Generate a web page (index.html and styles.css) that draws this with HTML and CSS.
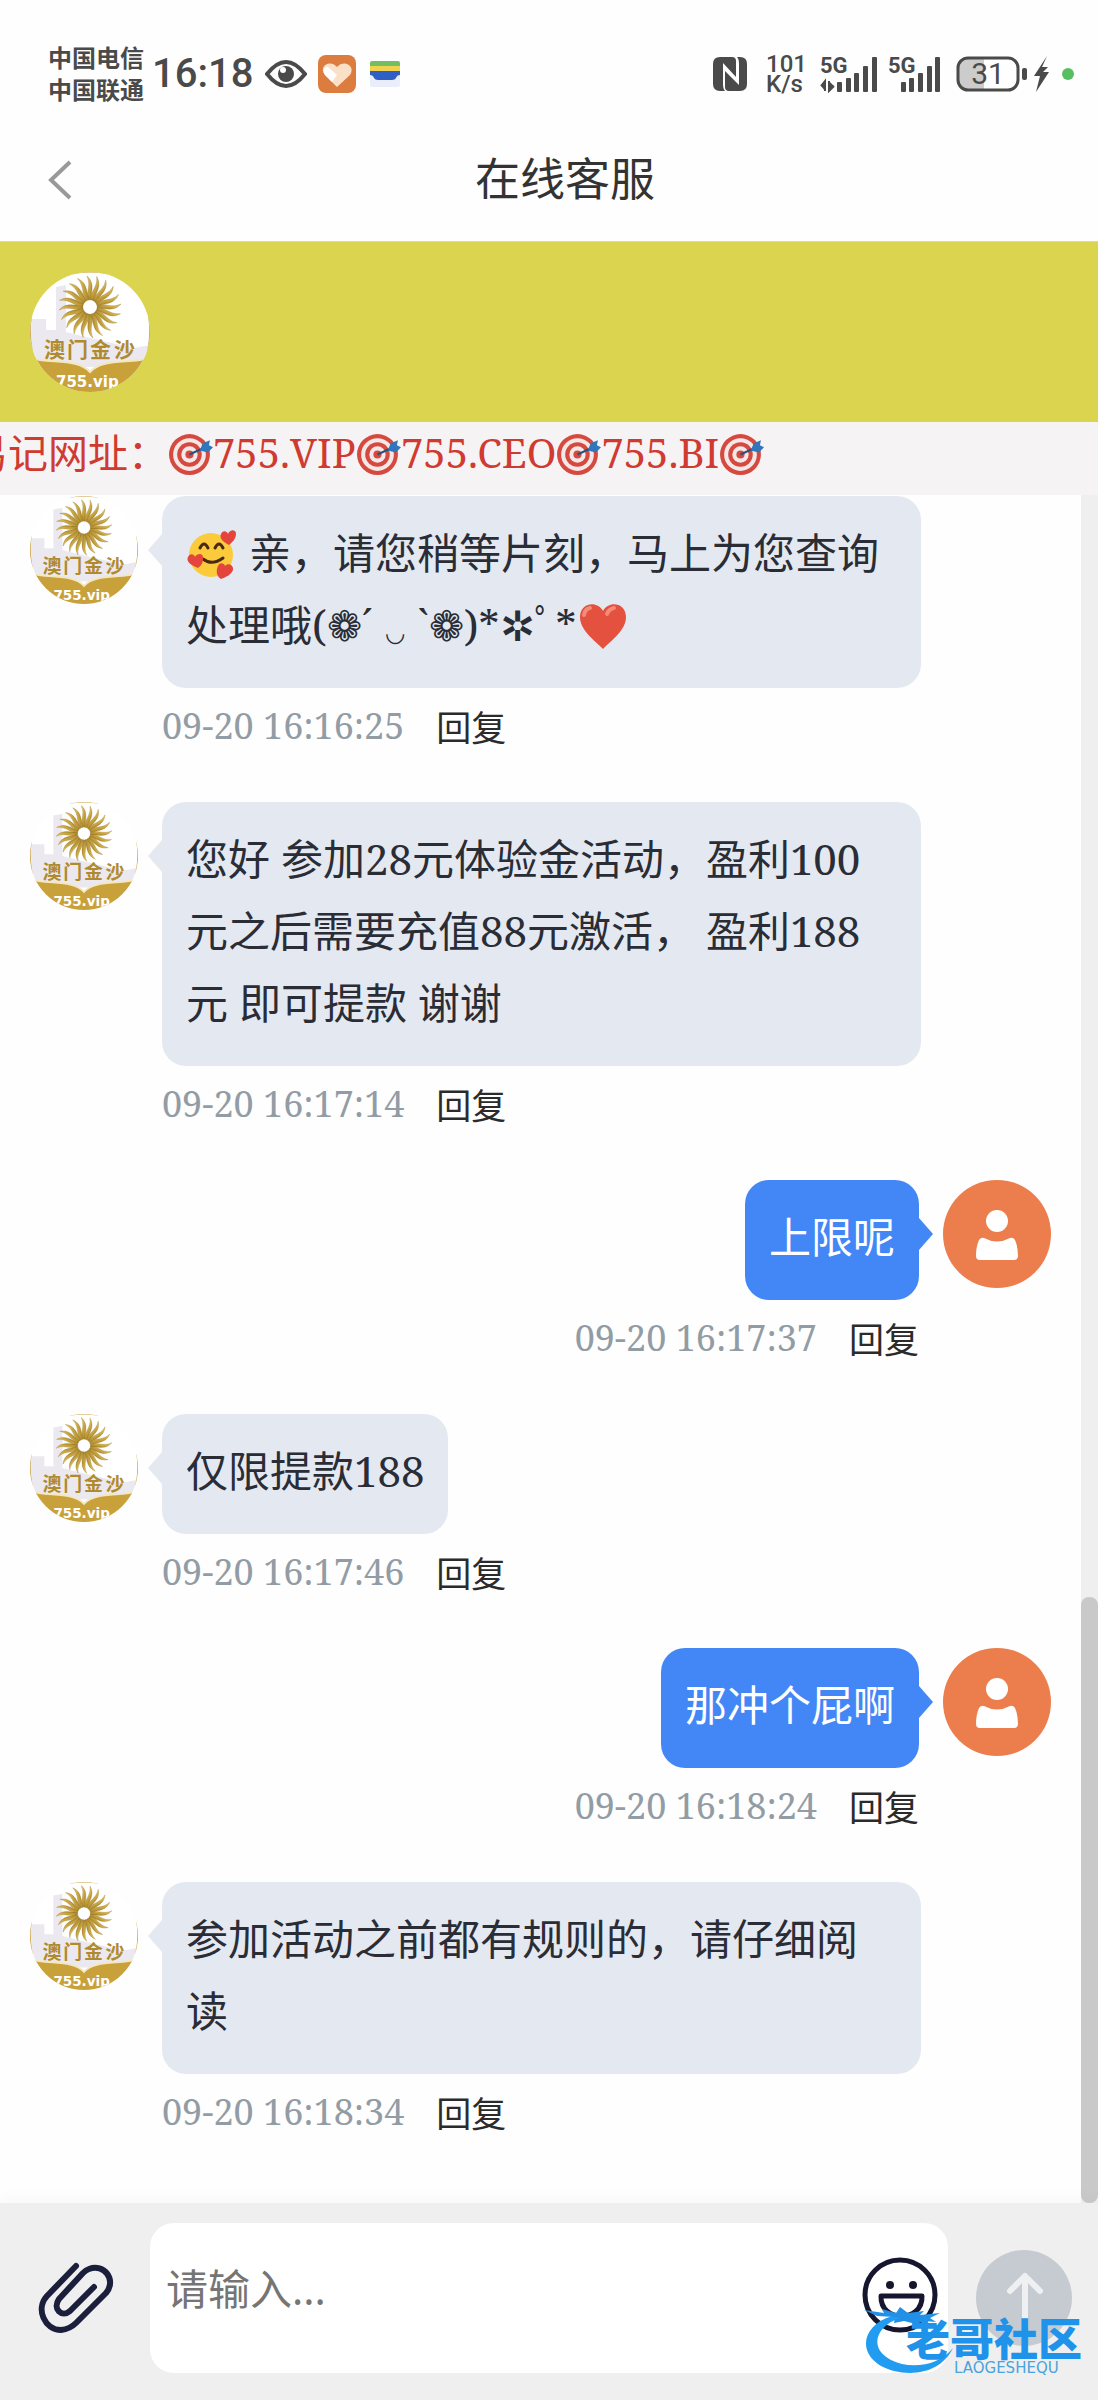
FILE: index.html
```html
<!DOCTYPE html>
<html lang="zh-CN">
<head>
    <meta charset="UTF-8">
    <meta name="viewport" content="width=device-width, initial-scale=1.0">
    <title>在线客服</title>
    <link rel="stylesheet" href="styles.css">
</head>
<body>
    <!-- shared icons -->
    <svg class="sprite" aria-hidden="true">
        <defs>
            <linearGradient id="gold" x1="0" y1="0" x2="1" y2="1">
                <stop offset="0" stop-color="#efd368"/>
                <stop offset="1" stop-color="#a17a20"/>
            </linearGradient>
            <clipPath id="round"><circle cx="60" cy="60" r="60"/></clipPath>
            <path id="ray" d="M60 28C54 22 62 15 57 4C66 12 60 21 62 28Z" fill="url(#gold)" stroke="#8a6a22" stroke-width="0.3"/>
            <g id="rays4">
                <use href="#ray"/>
                <use href="#ray" transform="rotate(90 60 35)"/>
                <use href="#ray" transform="rotate(180 60 35)"/>
                <use href="#ray" transform="rotate(270 60 35)"/>
            </g>
        </defs>
        <symbol id="logo" viewBox="0 0 120 120">
            <g clip-path="url(#round)">
                <rect width="120" height="120" fill="#fff"/>
                <path d="M0 47H16V58H26V15L36 13V60L60 66L104 76L120 73V95H0Z" fill="#ebe9ef"/>
                <use href="#rays4"/>
                <use href="#rays4" transform="rotate(18 60 35)"/>
                <use href="#rays4" transform="rotate(36 60 35)"/>
                <use href="#rays4" transform="rotate(54 60 35)"/>
                <use href="#rays4" transform="rotate(72 60 35)"/>
                <circle cx="60" cy="35" r="6" fill="#fff"/>
                <path d="M0 86C20 92 48 86 60 100C72 86 100 92 120 86V120H0Z" fill="#c9a13b"/>
                <path d="M0 86C20 92 48 86 60 100C72 86 100 92 120 86" fill="none" stroke="#f4e6bd" stroke-width="2"/>
                <text class="logo-name" x="14 37 60 84" y="85">澳门金沙</text>
                <text class="logo-site" x="26" y="115">755.vip</text>
                <path d="M44 1Q60-2 76 1M1 44Q-2 60 2 80M119 44Q122 60 118 80" fill="none" stroke="#c9a13b" stroke-width="2"/>
            </g>
        </symbol>
        <symbol id="user" viewBox="0 0 108 108">
            <circle cx="54" cy="54" r="54" fill="#ec7d4d"/>
            <circle cx="54" cy="41" r="11" fill="#fff"/>
            <path d="M41 58Q54 65 67 58Q70 57 72 60Q75 67 75 76Q75 80 71 80H37Q33 80 33 76Q33 67 36 60Q38 57 41 58Z" fill="#fff"/>
        </symbol>
        <symbol id="target" viewBox="0 0 44 44">
            <circle cx="21" cy="23" r="20" fill="#d6493e"/>
            <circle cx="21" cy="23" r="16" fill="#f3e8e8"/>
            <circle cx="21" cy="23" r="12" fill="#d6493e"/>
            <circle cx="21" cy="23" r="8" fill="#f3e8e8"/>
            <circle cx="21" cy="23" r="4" fill="#d6493e"/>
            <path d="M21 23L36 16" stroke="#26517e" stroke-width="2"/>
            <path d="M31 19L34 12L41 9L40 14L44 16L39 21Z" fill="#2f76bd"/>
        </symbol>
    </svg>

    <div class="status">
        <div class="status_left">
            <div class="carrier">
                <div>中国电信</div>
                <div>中国联通</div>
            </div>
            <div class="time">16:18</div>
            <svg class="eye" width="42" height="28" viewBox="0 0 42 28">
                <path d="M2 14Q21-10 40 14Q21 38 2 14Z" fill="none" stroke="#4a4a4a" stroke-width="4"/>
                <circle cx="21" cy="14" r="8" fill="#4a4a4a"/>
                <circle cx="18" cy="10" r="3" fill="#fff"/>
            </svg>
            <svg class="app" width="38" height="38" viewBox="0 0 38 38">
                <rect width="38" height="38" rx="8" fill="#dc7d3f"/>
                <path d="M19 32L7 20C0 11 12 4 19 12C26 4 38 11 32 20Z" fill="#fbe0c8"/>
                <path d="M19 20L10 12C6 11 4 16 7 20L14 27Z" fill="#fff"/>
            </svg>
            <svg class="wallet" width="30" height="28" viewBox="0 0 30 28">
                <rect y="12" width="30" height="15" rx="2" fill="#e9eefa"/>
                <path d="M0 7V3Q0 1 2 1H28Q30 1 30 3V7Z" fill="#72bf62"/>
                <rect y="6" width="30" height="5" fill="#f0d24f"/>
                <path d="M0 11H30V15Q27 15 26 18Q25 20 22 20H8Q5 20 4 18Q3 15 0 15Z" fill="#2f5fc4"/>
            </svg>
        </div>
        <div class="status_right">
            <svg width="36" height="36" viewBox="0 0 36 36">
                <path d="M8 1H20Q24 1 24 5V21L11 7V28Q11 33 13 35H8Q1 35 1 28V8Q1 1 8 1Z" fill="#4a4a4a"/>
                <path d="M25 1H28Q35 1 35 8V28Q35 35 28 35H17Q13 35 13 31V15L27 29V8Q27 3 25 1Z" fill="#4a4a4a"/>
            </svg>
            <div class="speed">
                <div>101</div>
                <div>K/s</div>
            </div>
            <svg class="signal" width="58" height="38" viewBox="0 0 58 38">
                <text class="net" x="0" y="18">5G</text>
                <path d="M1 31L5 26V36M9 26V36L14 31" fill="#4a4a4a" stroke="#4a4a4a" stroke-width="2"/>
                <g fill="#4a4a4a">
                    <rect x="17" y="27" width="5" height="10" rx="1"/>
                    <rect x="26" y="23" width="5" height="14" rx="1"/>
                    <rect x="34" y="18" width="5" height="19" rx="1"/>
                    <rect x="43" y="11" width="5" height="26" rx="1"/>
                    <rect x="52" y="2" width="5" height="35" rx="1"/>
                </g>
            </svg>
            <svg class="signal" width="54" height="38" viewBox="0 0 54 38">
                <text class="net" x="0" y="18">5G</text>
                <g fill="#4a4a4a">
                    <rect x="13" y="27" width="5" height="10" rx="1"/>
                    <rect x="21" y="23" width="5" height="14" rx="1"/>
                    <rect x="30" y="18" width="5" height="19" rx="1"/>
                    <rect x="39" y="11" width="5" height="26" rx="1"/>
                    <rect x="47" y="2" width="5" height="35" rx="1"/>
                </g>
            </svg>
            <svg class="battery" width="94" height="36" viewBox="0 0 94 36">
                <path d="M12 2H28V34H12Q2 34 2 24V12Q2 2 12 2Z" fill="#ccc"/>
                <rect x="2" y="2" width="60" height="32" rx="10" fill="none" stroke="#4a4a4a" stroke-width="3"/>
                <rect x="66" y="12" width="5" height="12" rx="2" fill="#4a4a4a"/>
                <text class="charge" x="32" y="28" text-anchor="middle">31</text>
                <path d="M91 0L78 20H84L80 36L93 16H87L92 11H86Z" fill="#4a4a4a"/>
            </svg>
            <div class="dot"></div>
        </div>
    </div>

    <div class="header">
        <button class="back" aria-label="返回">
            <svg width="24" height="40" viewBox="0 0 24 40">
                <path d="M22 2L3 20L22 38" fill="none" stroke="#999" stroke-width="4"/>
            </svg>
        </button>
        <h1 class="title">在线客服</h1>
    </div>

    <div class="banner">
        <svg class="brand" role="img" aria-label="澳门金沙"><use href="#logo"/></svg>
    </div>
    <div class="notice">
        <div class="notice_text">易记网址：<svg class="target"><use href="#target"/></svg>755.VIP<svg class="target"><use href="#target"/></svg>755.CEO<svg class="target"><use href="#target"/></svg>755.BI<svg class="target"><use href="#target"/></svg></div>
    </div>

    <div class="chat">
        <div class="list">
            <div class="msg">
                <svg class="avatar"><use href="#logo"/></svg>
                <div class="msg_body">
                    <div class="bubble"><svg class="emoji" viewBox="0 0 50 50">
                        <circle cx="24" cy="26" r="22" fill="#fbcb3c"/>
                        <path d="M13 19Q17 11 21 19M28 19Q32 11 36 19M16 30Q25 37 36 29" fill="none" stroke="#4a2a12" stroke-width="3" stroke-linecap="round"/>
                        <path d="M42 16C36 13 32 9 34 5C36 1 40 2 41 5C43 0 49 0 49 5C49 9 46 13 42 16Z" fill="#e4443c"/>
                        <path d="M11 39C3 36 -1 32 1 28C3 24 7 25 8 28C11 23 17 25 16 30C16 34 14 37 11 39Z" fill="#e4443c"/>
                        <path d="M34 50C29 47 29 41 31 37C33 33 37 34 38 37C41 33 47 36 46 41C44 46 39 48 34 50Z" fill="#e4443c"/>
                    </svg> 亲，请您稍等片刻，马上为您查询处理哦(❁´<span class="mouth">◡</span>`❁)*✲ﾟ*<svg class="emoji" viewBox="0 0 50 50">
                        <path d="M25 48C16 39 2 29 2 16C2 2 19 -1 25 10C31 -1 48 2 48 16C48 29 34 39 25 48Z" fill="#e5513f"/>
                        <path d="M6 14Q7 8 12 7M29 13Q31 8 36 7" fill="none" stroke="#f48a78" stroke-width="4" stroke-linecap="round"/>
                    </svg></div>
                    <div class="meta"><span class="date">09-20 16:16:25</span><button class="reply">回复</button></div>
                </div>
            </div>
            <div class="msg">
                <svg class="avatar"><use href="#logo"/></svg>
                <div class="msg_body">
                    <div class="bubble">您好 参加28元体验金活动，盈利100元之后需要充值88元激活， 盈利188元 即可提款 谢谢</div>
                    <div class="meta"><span class="date">09-20 16:17:14</span><button class="reply">回复</button></div>
                </div>
            </div>
            <div class="msg me">
                <svg class="avatar"><use href="#user"/></svg>
                <div class="msg_body">
                    <div class="bubble">上限呢</div>
                    <div class="meta"><span class="date">09-20 16:17:37</span><button class="reply">回复</button></div>
                </div>
            </div>
            <div class="msg">
                <svg class="avatar"><use href="#logo"/></svg>
                <div class="msg_body">
                    <div class="bubble">仅限提款188</div>
                    <div class="meta"><span class="date">09-20 16:17:46</span><button class="reply">回复</button></div>
                </div>
            </div>
            <div class="msg me">
                <svg class="avatar"><use href="#user"/></svg>
                <div class="msg_body">
                    <div class="bubble">那冲个屁啊</div>
                    <div class="meta"><span class="date">09-20 16:18:24</span><button class="reply">回复</button></div>
                </div>
            </div>
            <div class="msg">
                <svg class="avatar"><use href="#logo"/></svg>
                <div class="msg_body">
                    <div class="bubble">参加活动之前都有规则的，请仔细阅读</div>
                    <div class="meta"><span class="date">09-20 16:18:34</span><button class="reply">回复</button></div>
                </div>
            </div>
        </div>
        <div class="scroll"><div class="thumb"></div></div>
    </div>

    <div class="footer">
        <button class="attach" aria-label="附件">
            <svg width="76" height="72" viewBox="0 0 76 72">
                <path d="M38 4L9 34C-3 47 7 68 23 68Q32 67 38 61L68 31C79 18 66 1 51 7Q48 8 45 11L21 37C14 47 24 56 32 49L56 25" fill="none" stroke="#1b1f3b" stroke-width="6" stroke-linecap="round" stroke-linejoin="round"/>
            </svg>
        </button>
        <div class="field">
            <textarea class="input" aria-label="消息" placeholder="请输入..."></textarea>
            <button class="face" aria-label="表情">
                <svg width="76" height="76" viewBox="0 0 76 76">
                    <circle cx="38" cy="38" r="35" fill="none" stroke="#17162f" stroke-width="5"/>
                    <circle cx="28" cy="28" r="4" fill="#17162f"/>
                    <circle cx="51" cy="28" r="4" fill="#17162f"/>
                    <path d="M19 39H60C61 66 18 66 19 39Z" fill="none" stroke="#17162f" stroke-width="5" stroke-linejoin="round"/>
                </svg>
            </button>
        </div>
        <button class="send" aria-label="发送">
            <svg width="96" height="96" viewBox="0 0 96 96">
                <path d="M49 70V28M34 41L49 26L64 41" fill="none" stroke="#eef0f2" stroke-width="6" stroke-linecap="round" stroke-linejoin="round"/>
            </svg>
        </button>
        <div class="mark">
            <svg class="swirl" width="90" height="70" viewBox="0 0 90 70">
                <path d="M0 4L20 7L18 3L32 7L36 1L44 7L60 5L56 9L76 7L66 12L72 16L60 15L52 18L40 15L30 17L31 11L13 10Z" fill="#2190e6"/>
                <path d="M28 10C-6 20-8 55 30 65C55 71 79 63 89 42C75 60 46 64 27 54C4 42 12 20 36 12Z" fill="#229cf0"/>
            </svg>
            <div class="mark_text">
                <div class="mark_name">老哥社区</div>
                <div class="mark_en">LAOGESHEQU</div>
            </div>
        </div>
    </div>
</body>
</html>
```
FILE: styles.css
```css
*{
    margin: 0;
    padding: 0;
    box-sizing: border-box;
}
body{
    min-height: 100vh;
    display: flex;
    flex-direction: column;
    background: #fefefe;
    color: #2a2d36;
    font-family: "Noto Serif", "DejaVu Serif Condensed", "Noto Sans CJK SC", serif;
    font-size: 42px;
}
button{
    border: none;
    background: none;
    font: inherit;
    cursor: pointer;
}
svg{
    flex-shrink: 0;
}
.sprite{
    position: absolute;
    width: 0;
    height: 0;
}
.logo-name{
    font: 700 21px "Noto Sans CJK SC", sans-serif;
    fill: #b08a2e;
}
.logo-site{
    font: bold 15px "DejaVu Sans", sans-serif;
    fill: #fff;
}

/* status bar */
.status{
    display: flex;
    justify-content: space-between;
    align-items: center;
    height: 114px;
    padding: 34px 24px 0 48px;
    color: #4a4a4a;
    font-family: Roboto, "Noto Sans CJK SC", sans-serif;
    font-weight: 500;
}
.status_left,
.status_right{
    display: flex;
    align-items: center;
}
.carrier{
    padding-top: 2px;
    font-size: 24px;
    font-weight: 700;
    line-height: 32px;
}
.time{
    margin: 0 12px 0 8px;
    font-size: 40px;
    line-height: 48px;
}
.app{
    margin-left: 11px;
}
.wallet{
    margin-left: 14px;
}
.speed{
    margin: 0 13px 0 18px;
    font-size: 24px;
    line-height: 20px;
}
.signal{
    margin-right: 10px;
}
.net{
    font: 700 22px Roboto, sans-serif;
    fill: #4a4a4a;
}
.battery{
    margin-left: 4px;
}
.charge{
    font: 400 30px Roboto, sans-serif;
    fill: #4a4a4a;
}
.dot{
    width: 12px;
    height: 12px;
    margin-left: 12px;
    border-radius: 50%;
    background: #58bf60;
}

/* title */
.header{
    display: flex;
    align-items: center;
    height: 128px;
    padding: 0 48px;
    border-bottom: 1px solid #d8d8c8;
}
.back{
    display: flex;
    padding-top: 4px;
}
.title{
    flex: 1;
    padding: 0 0 2px 8px;
    text-align: center;
    color: #333;
    font-size: 45px;
    font-weight: 400;
}
.banner{
    height: 180px;
    padding: 30px;
    background: #dbd44e;
}
.brand{
    display: block;
    width: 120px;
    height: 120px;
}
.notice{
    height: 73px;
    overflow: hidden;
    background: #f5f3f4;
}
.notice_text{
    margin-left: -32px;
    color: #d03a30;
    font-size: 40px;
    line-height: 62px;
    white-space: nowrap;
}
.target{
    width: 45px;
    height: 45px;
    vertical-align: -8px;
}

/* messages */
.chat{
    flex: 1;
    display: flex;
}
.list{
    flex: 1;
    padding: 1px 30px 0;
}
.msg{
    display: flex;
    gap: 24px;
    margin-bottom: 40px;
}
.me{
    flex-direction: row-reverse;
}
.avatar{
    width: 108px;
    height: 108px;
}
.msg_body{
    flex: 1;
    display: flex;
    flex-direction: column;
    align-items: flex-start;
}
.me .msg_body{
    align-items: flex-end;
}
.bubble{
    position: relative;
    max-width: calc(100% - 130px);
    padding: 21px 24px 27px;
    border-radius: 24px;
    background: #e4e9f1;
    line-height: 72px;
}
.bubble::before{
    content: "";
    position: absolute;
    top: 38px;
    right: 100%;
    border: 16px solid transparent;
    border-left-width: 0;
    border-right: 14px solid #e4e9f1;
}
.me .bubble{
    background: #4387f7;
    color: #fff;
}
.me .bubble::before{
    right: auto;
    left: 100%;
    border-right-width: 0;
    border-left: 14px solid #4387f7;
}
.emoji{
    width: 52px;
    height: 50px;
    vertical-align: -10px;
}
.mouth{
    margin: 0 12px;
    font-size: 26px;
    line-height: 1;
}
.meta{
    display: flex;
    align-items: center;
    gap: 32px;
    height: 74px;
    font-size: 36px;
}
.date{
    color: #929ca5;
}
.reply{
    color: #2b2b2b;
    font-size: 35px;
}
.scroll{
    display: flex;
    align-items: flex-end;
    width: 17px;
    background: #efefef;
}
.thumb{
    width: 100%;
    height: 35.5%;
    border-radius: 8px;
    background: #c9c9c9;
}

/* input bar */
.footer{
    position: relative;
    display: flex;
    align-items: center;
    padding: 20px 26px 27px 38px;
    background: #efeff0;
    box-shadow: 0 -4px 16px rgba(0, 0, 0, 0.03);
}
.attach{
    display: flex;
    margin-right: 36px;
}
.field{
    flex: 1;
    display: flex;
    align-items: center;
    height: 150px;
    padding: 0 10px 6px 16px;
    border-radius: 24px;
    background: #fff;
}
.input{
    flex: 1;
    height: 72px;
    border: none;
    outline: none;
    resize: none;
    background: none;
    color: #2a2d36;
    font-family: "Noto Sans", "Noto Sans CJK SC", sans-serif;
    font-size: 42px;
    line-height: 60px;
}
.input::placeholder{
    color: #757575;
}
.face{
    display: flex;
}
.send{
    display: flex;
    margin-left: 28px;
    border-radius: 50%;
    background: #c6cbd2;
}
.mark{
    position: absolute;
    right: 16px;
    bottom: 24px;
    display: flex;
    align-items: flex-end;
    pointer-events: none;
}
.mark_text{
    margin-left: -48px;
}
.mark_name{
    color: #1f93ea;
    font: 900 44px/46px "Noto Sans CJK SC", sans-serif;
}
.mark_en{
    padding-left: 48px;
    color: #4aa3dd;
    font: 15px/16px "DejaVu Sans", sans-serif;
}
```
